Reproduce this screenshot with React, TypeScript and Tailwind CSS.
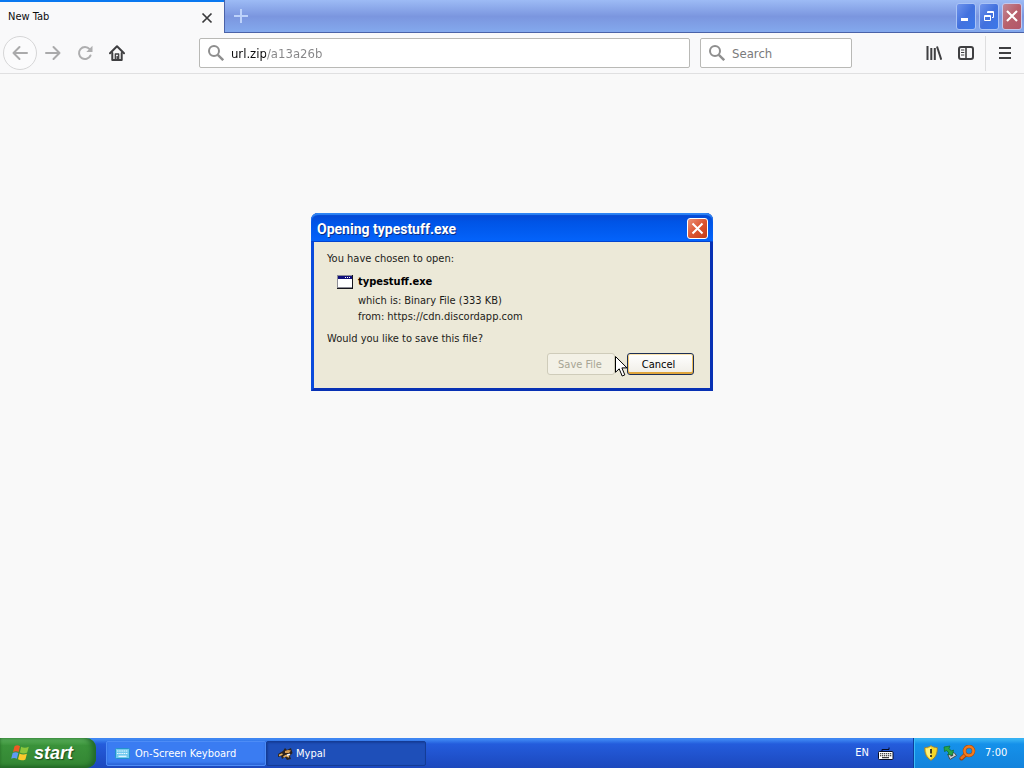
import type { ReactNode } from "react";

function MagnifierIcon() {
  return (
    <svg width="16" height="16" viewBox="0 0 16 16" fill="none" stroke="#8e8e8e" className="shrink-0" aria-hidden="true">
      <circle cx="6" cy="6" r="5" strokeWidth="2" />
      <path d="M9.8 9.8 15.2 15.2" strokeWidth="2.4" />
    </svg>
  );
}

function NavButton({ label, children }: { label: string; children: ReactNode }) {
  return (
    <button type="button" aria-label={label} className="flex h-8 w-8 shrink-0 items-center justify-center">
      {children}
    </button>
  );
}

function TitleBar() {
  return (
    <header className="flex h-[33px] shrink-0 bg-linear-to-b from-[#9dbbf5] via-[#7b96df] to-[#84aaee]">
      <div className="flex w-56 items-center justify-between border-t-[2px] border-[#0a78f0] bg-[#f9f9fa] pr-[9px] pl-2">
        <span className="text-[11px] text-[#0c0c0d]">New Tab</span>
        <button type="button" aria-label="Close tab" className="flex h-4 w-4 items-center justify-center">
          <svg width="12" height="12" viewBox="0 0 12 12" stroke="#3a3a3c" strokeWidth="1.7">
            <path d="M1.5 1.5 10.5 10.5M10.5 1.5 1.5 10.5" />
          </svg>
        </button>
      </div>
      <div className="flex flex-1 items-center justify-between border-b border-l border-[#4a62a8] pr-[2px] pl-2">
        <button type="button" aria-label="New tab" className="flex h-4 w-4 items-center justify-center">
          <svg width="14" height="14" viewBox="0 0 14 14" stroke="#bdd2fa" strokeWidth="2">
            <path d="M7 0V14M0 7H14" />
          </svg>
        </button>
        <div className="flex gap-[3px]">
          <button type="button" aria-label="Minimize" className="flex h-[27px] w-5 items-center justify-center rounded-[3px] border border-[#a9c3f6] bg-linear-to-br from-[#6f93ec] via-[#4271de] to-[#3b78ea]">
            <svg width="12" height="12" viewBox="0 0 12 12" fill="#fff"><path d="M1 8H8V11H1Z" /></svg>
          </button>
          <button type="button" aria-label="Restore" className="flex h-[27px] w-5 items-center justify-center rounded-[3px] border border-[#a9c3f6] bg-linear-to-br from-[#6f93ec] via-[#4271de] to-[#3b78ea]">
            <svg width="12" height="12" viewBox="0 0 12 12" fill="none" stroke="#fff" strokeWidth="1">
              <path d="M4.500 3V1.500H10.500V7.500H9M4 2.500H11M1.500 5.500H7.500V10.500H1.500ZM1 6.500H8" />
            </svg>
          </button>
          <button type="button" aria-label="Close" className="flex h-[27px] w-5 items-center justify-center rounded-[3px] border border-[#c3c8ee] bg-linear-to-br from-[#c08796] via-[#b8606c] to-[#b2576a]">
            <svg width="12" height="12" viewBox="0 0 12 12" stroke="#fff" strokeWidth="2.100"><path d="M1 1 11 11M11 1 1 11" /></svg>
          </button>
        </div>
      </div>
    </header>
  );
}

function Toolbar() {
  return (
    <nav className="flex h-[41px] shrink-0 items-center border-b border-[#e0e0e1] bg-[#f9f9fa]">
      <button type="button" aria-label="Back" className="ml-[3px] flex h-[34px] w-[34px] shrink-0 items-center justify-center rounded-full border border-[#d6d6d7] bg-[#fbfbfc]">
        <svg width="16" height="16" viewBox="0 0 16 16" fill="none" stroke="#aaaaab" strokeWidth="2" strokeLinecap="round" strokeLinejoin="round">
          <path d="M15 8H1.500M7.500 2 1.500 8 7.500 14" />
        </svg>
      </button>
      <NavButton label="Forward">
        <svg width="16" height="16" viewBox="0 0 16 16" fill="none" stroke="#aaaaab" strokeWidth="2" strokeLinecap="round" strokeLinejoin="round">
          <path d="M1 8H14.500M8.500 2 14.500 8 8.500 14" />
        </svg>
      </NavButton>
      <NavButton label="Reload">
        <svg width="16" height="16" viewBox="0 0 16 16" fill="none" stroke="#aeaeaf" strokeWidth="2">
          <path d="M12.600 4.200A6 6 0 1 0 13.500 10.500" strokeLinecap="round" />
          <path d="M15.500 0.800V7H9.300Z" fill="#aeaeaf" stroke="none" />
        </svg>
      </NavButton>
      <NavButton label="Home">
        <svg width="16" height="16" viewBox="0 0 16 16" fill="none" stroke="#3f3f41" strokeWidth="2" strokeLinecap="round" strokeLinejoin="round">
          <path d="M1 8.300 8 1.300 15 8.300" />
          <path d="M3.300 8V15H12.700V8" />
          <path d="M6.300 15V9H9.700V15" strokeWidth="1.300" />
          <path d="M8.200 11.500V14" strokeWidth="1.500" />
        </svg>
      </NavButton>
      <div className="grow-[67] basis-0" />
      <label className="flex h-[30px] min-w-0 grow-[489] basis-0 items-center rounded-[2px] border border-[#b9b9b6] bg-white pl-2">
        <MagnifierIcon />
        <input
          aria-label="Address"
          defaultValue="url.zip/a13a26b"
          className="ml-[7px] w-0 min-w-0 flex-1 bg-linear-to-r from-[#0c0c0d] from-[35px] to-[#858587] to-[35px] bg-clip-text pt-[2px] text-[13px] text-transparent outline-none"
        />
      </label>
      <label className="ml-[10px] flex h-[30px] w-[152px] items-center rounded-[2px] border border-[#b9b9b6] bg-white pl-2">
        <MagnifierIcon />
        <input aria-label="Search" placeholder="Search" className="ml-[7px] w-0 min-w-0 flex-1 pt-[2px] text-[13px] outline-none placeholder:text-[#7a7a7c]" />
      </label>
      <div className="grow-[67] basis-0" />
      <NavButton label="Library">
        <svg width="16" height="16" viewBox="0 0 16 16" stroke="#3f3f41" strokeWidth="2">
          <path d="M1.500 1V15M5.300 3V15M8.800 3V15" />
          <path d="M11 1.500 15.300 14.800" />
        </svg>
      </NavButton>
      <NavButton label="Sidebars">
        <svg width="16" height="16" viewBox="0 0 16 16" fill="none" stroke="#3f3f41" strokeWidth="2">
          <rect x="1" y="2" width="14" height="12" rx="2" />
          <path d="M8 2V14" strokeWidth="1.600" />
          <path d="M3 5H6.300M3 7.500H6.300M3 10H6.300" strokeWidth="1" />
        </svg>
      </NavButton>
      <div className="ml-[3px] h-[35px] border-l border-[#dededf]" />
      <button type="button" aria-label="Open menu" className="flex h-8 w-[38px] items-center justify-center">
        <svg width="14" height="14" viewBox="0 0 14 14" stroke="#3f3f41" strokeWidth="2">
          <path d="M1 2H13M1 7H13M1 12H13" />
        </svg>
      </button>
    </nav>
  );
}

function OpeningDialog() {
  return (
    <section
      role="dialog"
      aria-labelledby="dialog-title"
      className="relative flex w-[402px] flex-col self-start rounded-t-[7px] border-x-[3px] border-b-[3px] border-l-[#0a4bdc] border-r-[#0831b4] border-b-[#0831b4] bg-[#ece9d8]"
    >
      <div className="-mx-[3px] flex h-[29px] items-center justify-between rounded-t-[7px] bg-linear-to-b from-[#0845cc] via-[#0054e6] via-30% to-[#0464fc] pt-[2px] pr-[5px] pl-[6px] shadow-[inset_0_2px_1px_#2f86f5,inset_0_-1px_0_#0343cf]">
        <h1 id="dialog-title" className="pt-px font-['Roboto'] text-[14px] font-bold text-white [text-shadow:1px_1px_#0b2f86]">Opening typestuff.exe</h1>
        <button type="button" aria-label="Close dialog" className="flex h-[21px] w-[21px] items-center justify-center rounded-[3px] border border-white bg-linear-to-br from-[#ea9076] via-[#dc5531] to-[#c43c17]">
          <svg width="13" height="13" viewBox="0 0 13 13" stroke="#fff" strokeWidth="2"><path d="M1.500 1.500 11.500 11.500M11.500 1.500 1.500 11.500" /></svg>
        </button>
      </div>
      <div className="px-[13px] pt-[9px] pb-[13px] text-[11px] leading-4 text-[#1c1c18]">
        <p>You have chosen to open:</p>
        <div className="mt-[7px] flex gap-[5px] pl-[10px]">
          <svg width="16" height="14" viewBox="0 0 16 14" className="mt-px shrink-0" aria-hidden="true">
            <path d="M0 0H16V14H0Z" fill="#15151c" />
            <path d="M0 0H15V13H0Z" fill="#8d8d96" />
            <path d="M1 1H15V12H1Z" fill="#fff" />
            <path d="M1 1H15V4H1Z" fill="#10107c" />
            <path d="M8 2H9V3H8ZM10 2H11V3H10ZM12 2H13V3H12Z" fill="#fff" />
          </svg>
          <div>
            <p className="font-bold text-black">typestuff.exe</p>
            <p className="mt-[3px] flex gap-[3px]"><span>which is:</span><span>Binary File (333 KB)</span></p>
            <p className="flex gap-[3px]"><span>from:</span><span>https://cdn.discordapp.com</span></p>
          </div>
        </div>
        <p className="mt-[6px]">Would you like to save this file?</p>
        <div className="mt-[6px] flex justify-end gap-3 pr-[3px]">
          <button type="button" disabled className="h-[22px] w-[68px] rounded-[3px] border border-[#cfccba] bg-[#f3f1e6] pt-px pr-[2px] text-[#a7a594]">Save File</button>
          <button type="button" className="h-[22px] w-[67px] rounded-[3px] border border-[#1d2f55] bg-linear-to-b from-white to-[#efede6] pt-px pr-1 text-black shadow-[inset_0_-2px_0_#dfa53c,inset_0_1px_0_#fbe3ad,inset_1px_0_0_#f5cb70,inset_-1px_0_0_#f0bd58]">Cancel</button>
        </div>
      </div>
      <svg width="14" height="22" viewBox="0 0 14 22" className="absolute top-[143px] left-[301px]" aria-hidden="true">
        <path d="M0.500 0.500V16.300L4.200 12.800 7.200 20 9.800 18.900 6.900 11.900H12Z" fill="#fff" stroke="#000" />
      </svg>
    </section>
  );
}

function WindowsLogo() {
  return (
    <svg width="19" height="18" viewBox="0 0 19 18" aria-hidden="true">
      <path d="M3.500 2.200C5.500 1 7.500 1.200 9 2.200L7.600 8C6 7 4 7 2 8Z" fill="#ee5a24" />
      <path d="M10.200 2.700C12.500 4 15 4 17.800 2.800L16.200 8.600C14 9.800 11.200 9.800 8.800 8.500Z" fill="#8cc63c" />
      <path d="M1.700 9C3.700 8 5.700 8 7.300 9L5.900 14.700C4 13.700 2 13.800 0.200 14.700Z" fill="#5f9af2" />
      <path d="M8.500 9.500C11 10.800 13.500 10.800 15.900 9.700L14.400 15.500C12 16.700 9.500 16.600 7 15.300Z" fill="#fbc92c" />
    </svg>
  );
}

function Taskbar() {
  return (
    <footer className="flex h-[30px] shrink-0 bg-linear-to-b from-[#3e86f2] from-5% via-[#245cdc] via-20% to-[#1c48bd] text-[11px] text-white">
      <button type="button" className="mr-[10px] flex w-24 items-center rounded-r-[10px] bg-linear-to-b from-[#5bb25b] from-5% via-[#3a923a] via-25% to-[#338533] pl-[11px] shadow-[inset_-4px_0_5px_#236b2b,inset_0_-2px_3px_#256b25]">
        <WindowsLogo />
        <span className="ml-1 font-['Liberation_Sans'] text-[18px] leading-5 font-bold italic [text-shadow:1px_1px_1px_#1d4a1d]">start</span>
      </button>
      <button type="button" className="mt-[3px] mb-[2px] flex w-40 items-center rounded-[2px] border border-[#4d8cf6] bg-[#3a7cf2] pl-2 shadow-[inset_0_-2px_2px_#2c66d9]">
        <svg width="16" height="12" viewBox="0 0 16 12" aria-hidden="true">
          <rect x="0.500" y="0.500" width="14" height="10" rx="1" fill="#72c9ef" stroke="#2393cb" />
          <path d="M2 3H13M2 5.500H13" stroke="#e9faff" strokeWidth="1.200" strokeDasharray="1.500 0.700" />
          <path d="M3.500 8.300H11.500" stroke="#e9faff" strokeWidth="1.200" />
        </svg>
        <span className="ml-1 pt-px">On-Screen Keyboard</span>
      </button>
      <button type="button" className="mt-[3px] mb-[2px] flex w-40 items-center rounded-[2px] border border-[#143c96] bg-[#1e4fb9] pl-[11px] shadow-[inset_1px_1px_2px_#163e9a]">
        <svg width="15" height="14" viewBox="0 0 15 14" aria-hidden="true">
          <path d="M0 7 5 4 7 1 9 3 13 1 14.500 6 12 9 13 12 9 13 7 10 4 12 3 9 0 10Z" fill="#2c2320" />
          <path d="M7 4 10 3 13 3.500 11 6 7 6Z" fill="#d69b50" />
          <path d="M1 8.500 4.500 7M5.500 10 8 8.500 11 10" stroke="#e6b062" strokeWidth="1.500" fill="none" />
          <path d="M8.500 7.500 11.500 6.500 12.500 8 9.500 9Z" fill="#fff" />
        </svg>
        <span className="ml-[3px] pt-[2px]">Mypal</span>
      </button>
      <div className="ml-auto flex items-center gap-[9px] pr-[19px]">
        <span className="pt-px">EN</span>
        <svg width="16" height="13" viewBox="0 0 16 13" aria-hidden="true">
          <path d="M4 4V2.500H11V0.500" fill="none" stroke="#050b24" />
          <rect x="0.500" y="4.500" width="14.500" height="8" rx="1" fill="#fff" stroke="#050b24" />
          <path d="M2 6.700H14M2 8.700H14" stroke="#111" strokeWidth="1.100" strokeDasharray="1.300 0.700" />
          <path d="M4 10.700H11" stroke="#111" />
        </svg>
      </div>
      <div className="flex w-[111px] items-center border-l border-[#0c3d9c] bg-linear-to-b from-[#35b1f3] from-5% via-[#1591ea] via-20% to-[#1383dc] pl-[10px] shadow-[inset_1px_0_0_#3cbdf8]">
        <svg width="14" height="16" viewBox="0 0 14 16" aria-hidden="true">
          <path d="M7 0.600C9 2 11 2.500 13.300 2.600 13.600 8.500 11.500 13 7 15.400 2.500 13 0.400 8.500 0.700 2.600 3 2.500 5 2 7 0.600Z" fill="#f7d627" stroke="#8b7e50" />
          <path d="M7 2C5.500 3 4 3.400 1.900 3.600 1.900 8.500 3.500 12 7 14Z" fill="#fff27d" />
          <path d="M7 4V8.500M7 10V12" stroke="#1a1a1a" strokeWidth="1.600" />
        </svg>
        <svg width="14" height="16" viewBox="0 0 14 16" className="ml-[5px]" aria-hidden="true">
          <path d="M5 10 11 7.500 13.500 10.500 7 14.500Z" fill="#ced3d7" stroke="#444b52" />
          <path d="M7.500 11 10 9.800" stroke="#454545" strokeWidth="1.500" />
          <path d="M1 2 7 1 6 3.500 8.500 6 10.500 5 9.500 10 4.500 9.500 6 8 3.500 5.500 1.500 6.500Z" fill="#27a548" stroke="#0d6d2c" strokeWidth="0.700" />
        </svg>
        <svg width="17" height="16" viewBox="0 0 17 16" className="ml-[2px]" fill="none" aria-hidden="true">
          <path d="M6.500 9.500 2.500 13.500" stroke="#9c4308" strokeWidth="4" strokeLinecap="round" />
          <path d="M6.500 9.500 2.500 13" stroke="#ec701a" strokeWidth="2.500" strokeLinecap="round" />
          <circle cx="10" cy="6" r="4.500" stroke="#a4490b" strokeWidth="3.500" />
          <circle cx="10" cy="6" r="4.500" stroke="#f37a1d" strokeWidth="2.500" />
        </svg>
        <time className="ml-[9px] pt-px">7:00</time>
      </div>
    </footer>
  );
}

export default function App() {
  return (
    <div className="flex h-screen flex-col overflow-hidden bg-[#f9f9f9] font-['DejaVu_Sans_Condensed','Noto_Sans',sans-serif]">
      <TitleBar />
      <Toolbar />
      <main className="flex flex-1 justify-center pt-[139px]">
        <OpeningDialog />
      </main>
      <Taskbar />
    </div>
  );
}
